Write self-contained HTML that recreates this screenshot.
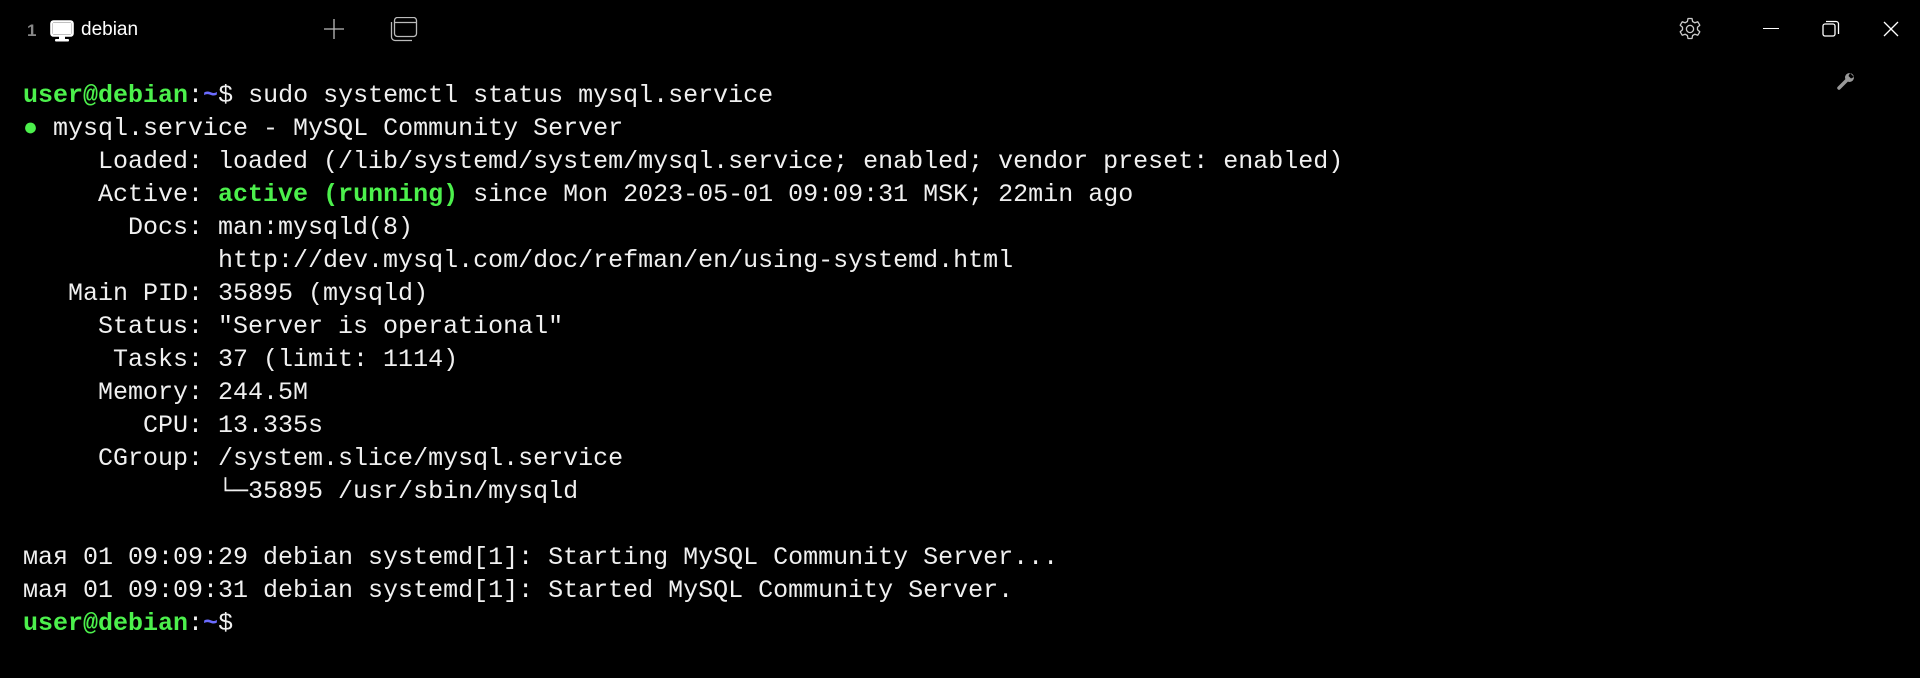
<!DOCTYPE html>
<html><head><meta charset="utf-8"><style>
body{margin:0;width:1920px;height:678px;background:#000;overflow:hidden;position:relative;font-family:"Liberation Sans",sans-serif;color:#fff}
.term{position:absolute;left:23px;top:79px;font-family:"Liberation Mono","DejaVu Sans Mono",monospace;font-size:25px;line-height:33px;white-space:pre;color:#f0f0f0}
.g{color:#4cf04c;font-weight:bold}.b{color:#6b6bff;font-weight:bold}
.ag{color:#4cf04c}
.ic{position:absolute}
</style></head><body>
<div class="ic" style="left:27px;top:21px;font-size:17px;color:#888;font-weight:bold">1</div>
<svg class="ic" style="left:50px;top:19px" width="24" height="24" viewBox="0 0 24 24"><rect x="1.5" y="2.5" width="21" height="14" rx="2" fill="none" stroke="#fff" stroke-width="2.6"/><rect x="3" y="4" width="18" height="11" fill="#fff"/><rect x="9" y="17" width="6" height="3" fill="#fff"/><rect x="5" y="20" width="14" height="2.5" rx="1" fill="#fff"/></svg>
<div class="ic" style="left:81px;top:19px;font-size:19px;color:#fff">debian</div>
<svg class="ic" style="left:324px;top:19px" width="20" height="20"><path d="M10 0V20M0 10H20" stroke="#bbb" stroke-width="1.3"/></svg>
<svg class="ic" style="left:390px;top:17px" width="28" height="25" viewBox="0 0 28 25"><rect x="4.5" y="0.5" width="22" height="19" rx="3" fill="none" stroke="#bbb" stroke-width="1.3"/><path d="M4.5 5.5H26.5" stroke="#bbb" stroke-width="1.3"/><path d="M1.5 5V20a3.5 3.5 0 0 0 3.5 3.5H22" fill="none" stroke="#bbb" stroke-width="1.3"/></svg>
<svg class="ic" style="left:1678px;top:17px" width="24" height="24" viewBox="0 0 24 24"><path d="M10 1.5h4l.6 3 2.3 1.3 2.9-1 2 3.4-2.3 2v2.6l2.3 2-2 3.4-2.9-1-2.3 1.3-.6 3h-4l-.6-3-2.3-1.3-2.9 1-2-3.4 2.3-2v-2.6l-2.3-2 2-3.4 2.9 1L9.4 4.5z" fill="none" stroke="#ccc" stroke-width="1.3" stroke-linejoin="round"/><circle cx="12" cy="12" r="3.6" fill="none" stroke="#ccc" stroke-width="1.3"/></svg>
<div class="ic" style="left:1763px;top:28px;width:16px;height:1.3px;background:#fff"></div>
<svg class="ic" style="left:1822px;top:20px" width="18" height="18" viewBox="0 0 18 18"><rect x="1" y="4" width="12" height="12" rx="2" fill="none" stroke="#fff" stroke-width="1.3"/><path d="M4 1.5h10a2.5 2.5 0 0 1 2.5 2.5v10" fill="none" stroke="#fff" stroke-width="1.3"/></svg>
<svg class="ic" style="left:1883px;top:21px" width="16" height="16"><path d="M1 1L15 15M15 1L1 15" stroke="#fff" stroke-width="1.3"/></svg>
<svg class="ic" style="left:1836px;top:71px" width="20" height="20" viewBox="0 0 20 20"><path d="M3 17L11 9" stroke="#999" stroke-width="3.5" stroke-linecap="round"/><circle cx="13.5" cy="6.5" r="4.5" fill="#999"/><path d="M14 2L18 6L15 7.5L12.5 5z" fill="#000"/></svg>
<div class="term"><span class="g">user@debian</span>:<span class="b">~</span>$ sudo systemctl status mysql.service
<span class="ag">●</span> mysql.service - MySQL Community Server
     Loaded: loaded (/lib/systemd/system/mysql.service; enabled; vendor preset: enabled)
     Active: <span class="g">active (running)</span> since Mon 2023-05-01 09:09:31 MSK; 22min ago
       Docs: man:mysqld(8)
             http://dev.mysql.com/doc/refman/en/using-systemd.html
   Main PID: 35895 (mysqld)
     Status: "Server is operational"
      Tasks: 37 (limit: 1114)
     Memory: 244.5M
        CPU: 13.335s
     CGroup: /system.slice/mysql.service
             └─35895 /usr/sbin/mysqld

мая 01 09:09:29 debian systemd[1]: Starting MySQL Community Server...
мая 01 09:09:31 debian systemd[1]: Started MySQL Community Server.
<span class="g">user@debian</span>:<span class="b">~</span>$</div>
</body></html>
